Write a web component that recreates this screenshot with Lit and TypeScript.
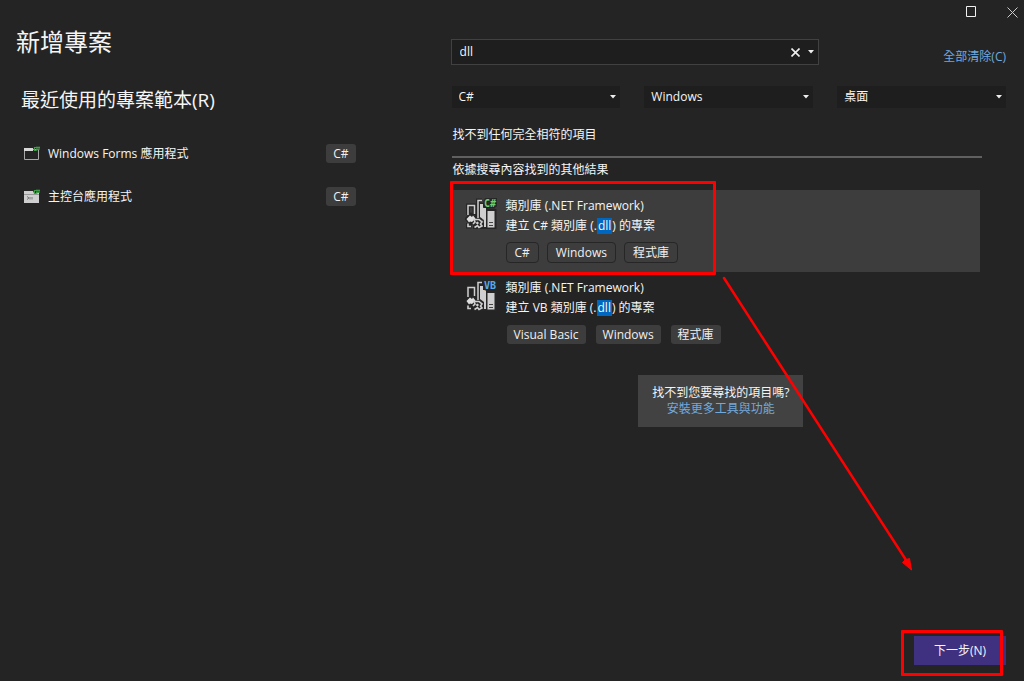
import { LitElement, html, css, svg } from "lit";
import { customElement, property } from "lit/decorators.js";

const FONT = css`"Open Sans", "Noto Sans CJK TC", sans-serif`;

@customElement("tag-chip")
class TagChip extends LitElement {
  @property({ type: Boolean, reflect: true }) outlined = false;

  static styles = css`
    :host {
      display: inline-block;
      box-sizing: border-box;
      padding: 0 7px;
      border: 1px solid transparent;
      border-radius: 4px;
      background: #3d3d3d;
      background-clip: padding-box;
      color: #f0f0f0;
      font: 12px/19px ${FONT};
      white-space: nowrap;
    }
    :host([outlined]) {
      padding: 0 8px;
      border-color: #262626;
    }
  `;

  render() {
    return html`<slot></slot>`;
  }
}

@customElement("library-icon")
class LibraryIcon extends LitElement {
  @property() label = "C#";
  @property() tint = "#6fcf73";

  static styles = css`
    :host {
      display: block;
      width: 32px;
      height: 34px;
    }
    svg {
      display: block;
    }
    .badge {
      font: bold 10px "DejaVu Sans Mono", monospace;
      paint-order: stroke;
      stroke: #262626;
      stroke-width: 3px;
    }
  `;

  render() {
    const shape = svg`
      <path d="M3 17V7.500H9.500V17M13 22V2.500H17M15 7H21V29H15ZM22.500 13H29.500V29H22.500Z
        M2 21L6 17L10 21L6 25ZM3 25V28.500H6.500M10 19H15V22M10 29H14L17 26L14 23L10 25Z"/>`;
    return html`
      <svg width="32" height="34" viewBox="0 0 32 34" aria-hidden="true">
        <g fill="none" stroke="#262626" stroke-width="4">${shape}</g>
        <path d="M3 17V7.500H9.500V16M13 20V2.500H17" fill="none" stroke="#cfcfcf" stroke-width="1.500" />
        <path d="M15 6H18V10H21V29H19V22L15 19Z" fill="#cfcfcf" />
        <path d="M22.500 13H29.500V29.500H22.500Z" fill="#cfcfcf" />
        <path d="M24 24.500H28M24 27.500H28" stroke="#444" stroke-width="1" />
        <path d="M1.500 21L5 17.500L7 19L8 17.500L10.500 20.500L7 24L5 23.500L4 24.500Z" fill="#dedede" />
        <path d="M3 25.500V28.500H6M8 26L10 24L9 21.500H14L17 24L15.500 26L17 28L14 29.500L12.500 27.500L9.500 29.500"
          fill="none" stroke="#cfcfcf" stroke-width="1.600" />
        <path d="M10.500 25L12.500 23.500L14 25L12.500 26.500Z" fill="#cfcfcf" />
        <text class="badge" x="19" y="9" fill=${this.tint}>${this.label}</text>
      </svg>
    `;
  }
}

@customElement("template-result")
class TemplateResult extends LitElement {
  @property() language = "";
  @property() tint = "";
  @property({ attribute: false }) tags: string[] = [];
  @property({ type: Boolean, reflect: true }) selected = false;

  static styles = css`
    :host {
      display: grid;
      grid-template-columns: 32px 1fr;
      column-gap: 9px;
      position: relative;
      padding: 6px 13px 9px;
      color: #f5f5f5;
      font: 12px/20px ${FONT};
    }
    :host([selected]) {
      background: #3d3d3d;
    }
    h3,
    p {
      margin: 0;
      font: inherit;
    }
    library-icon {
      margin-top: 2px;
    }
    mark {
      display: inline-block;
      padding: 0 1px;
      background: #0067c0;
      color: inherit;
      line-height: 16px;
    }
    .tags {
      display: flex;
      flex-wrap: wrap;
      gap: 8px;
      margin-top: 6px;
    }
    .frame {
      position: absolute;
      left: -2px;
      top: -9px;
      width: 260px;
      bottom: -3px;
      border: 3px solid #f00;
      border-radius: 1px;
      pointer-events: none;
    }
  `;

  render() {
    return html`
      <library-icon .label=${this.language} .tint=${this.tint}></library-icon>
      <div>
        <h3>類別庫 (.NET Framework)</h3>
        <p>建立 ${this.language} 類別庫 (.<mark>dll</mark>) 的專案</p>
        <div class="tags">
          ${this.tags.map((t) => html`<tag-chip ?outlined=${this.selected}>${t}</tag-chip>`)}
        </div>
      </div>
      ${this.selected ? html`<div class="frame"></div>` : null}
    `;
  }
}

@customElement("filter-select")
class FilterSelect extends LitElement {
  @property() label = "";
  @property() value = "";

  static styles = css`
    :host {
      display: grid;
      align-items: center;
      flex: 1;
      background: #1e1e1e;
    }
    select,
    svg {
      grid-area: 1 / 1;
    }
    select {
      appearance: none;
      width: 100%;
      height: 22px;
      padding: 0 20px 0 7px;
      border: 0;
      background: transparent;
      color: #f5f5f5;
      font: 12px/20px ${FONT};
    }
    svg {
      justify-self: end;
      margin-right: 4px;
      pointer-events: none;
    }
  `;

  render() {
    return html`
      <select aria-label=${this.label}>
        <option selected>${this.value}</option>
      </select>
      <svg width="6" height="4" viewBox="0 0 6 4" aria-hidden="true"><path d="M0 0H6L3 3.500Z" fill="#eee" /></svg>
    `;
  }
}

@customElement("app-root")
class AppRoot extends LitElement {
  static styles = css`
    :host {
      display: flex;
      flex-direction: column;
      box-sizing: border-box;
      position: relative;
      min-height: 100vh;
      overflow: hidden;
      background: #242424;
      color: #f5f5f5;
      font: 12px/16px ${FONT};
    }
    button {
      padding: 0;
      border: 0;
      background: none;
      color: inherit;
      font: inherit;
    }
    svg {
      display: block;
    }
    a {
      color: #71a9dc;
      text-decoration: none;
    }
    .titlebar {
      display: flex;
      justify-content: flex-end;
      align-items: center;
      gap: 30px;
      height: 24px;
      padding-right: 6px;
    }
    main {
      flex: 1;
      display: grid;
      grid-template-columns: 44fr 56fr;
    }
    .recent {
      padding: 0 94px 0 16px;
    }
    h1 {
      margin: 0;
      font-size: 24px;
      line-height: 36px;
      font-weight: 400;
    }
    h2 {
      margin: 26px 0 0 5px;
      font-size: 19px;
      line-height: 28px;
      font-weight: 400;
    }
    .recent ul {
      display: grid;
      gap: 22px;
      margin: 29px 0 0;
      padding: 0 0 0 8px;
      list-style: none;
    }
    .recent li {
      display: grid;
      grid-template-columns: 16px 1fr auto;
      align-items: center;
      column-gap: 8px;
    }
    .browse {
      display: flex;
      flex-direction: column;
      padding: 15px 18px 0 0;
    }
    .searchrow {
      display: flex;
      justify-content: space-between;
      align-items: flex-end;
    }
    .search {
      display: flex;
      align-items: center;
      gap: 8px;
      flex: 0 1 368px;
      box-sizing: border-box;
      height: 26px;
      padding: 0 4px 0 8px;
      border: 1px solid #414141;
      background: #1e1e1e;
    }
    .search input {
      flex: 1;
      min-width: 0;
      padding: 0;
      border: 0;
      outline: 0;
      background: transparent;
      color: inherit;
      font: inherit;
    }
    .filters {
      display: flex;
      gap: 24px;
      margin-top: 21px;
      padding-left: 1px;
    }
    .results {
      margin: 0 16px 0 1px;
    }
    .nomatch {
      margin: 19px 8px 0 0;
      padding: 0 0 13px 1px;
      border-bottom: 2px solid #606060;
    }
    .others {
      margin: 4px 0 12px;
      padding-left: 1px;
    }
    template-result {
      margin-right: 10px;
    }
    .missing {
      width: fit-content;
      box-sizing: border-box;
      margin: 21px auto 0;
      padding: 10px 14px;
      background: #424242;
      text-align: center;
    }
    .missing p {
      margin: 0;
    }
    footer {
      display: flex;
      justify-content: flex-end;
      padding: 0 18px 16px;
    }
    .nextwrap {
      position: relative;
    }
    .next {
      padding: 0 20px;
      background: #403080;
      line-height: 29px;
    }
    .nextframe {
      position: absolute;
      inset: -6px 3px -11px -13px;
      border: 3px solid #f00;
      border-radius: 1px;
      pointer-events: none;
    }
    .arrow {
      position: absolute;
      left: 720px;
      top: 274px;
      pointer-events: none;
    }
  `;

  private recentIcon(kind: string) {
    return html`
      <svg width="16" height="16" viewBox="0 0 16 16" aria-hidden="true">
        ${kind === "form"
          ? svg`<path d="M.500 3.500H14.500V13.500H.500Z" fill="#242424" stroke="#a8a8a8"/><path d="M0 2H9V5H0Z" fill="#d8d8d8"/>`
          : svg`<path d="M0 2H9L10 4H15V14H0Z" fill="#cfcfcf"/><path d="M0 5.500H15" stroke="#999"/><path d="M3 7.500L5 9L3 10.500M6 8V10.500M8 8V10.500" fill="none" stroke="#777"/>`}
        <path d="M13 1.500H10.500V4.500H12.500M13 .500V4.500M15 .500V4M12 1.500H16M12 3.500H15.500" fill="none" stroke="#3f9b45" stroke-width="1.200" />
      </svg>
    `;
  }

  render() {
    return html`
      <header class="titlebar">
        <button aria-label="最大化">
          <svg width="12" height="12" viewBox="0 0 12 12"><path d="M1.500 .500H10.500V10.500H1.500Z" fill="none" stroke="#f0f0f0" /></svg>
        </button>
        <button aria-label="關閉">
          <svg width="11" height="11" viewBox="0 0 11 11"><path d="M.500 .500L10.500 10.500M10.500 .500L.500 10.500" stroke="#ccc" /></svg>
        </button>
      </header>
      <main>
        <section class="recent">
          <h1>新增專案</h1>
          <h2>最近使用的專案範本(R)</h2>
          <ul>
            <li>${this.recentIcon("form")}<span>Windows Forms 應用程式</span><tag-chip>C#</tag-chip></li>
            <li>${this.recentIcon("console")}<span>主控台應用程式</span><tag-chip>C#</tag-chip></li>
          </ul>
        </section>
        <section class="browse">
          <div class="searchrow">
            <div class="search">
              <input type="text" aria-label="搜尋" value="dll" />
              <button aria-label="清除">
                <svg width="9" height="9" viewBox="0 0 9 9"><path d="M.500 .500L8.500 8.500M8.500 .500L.500 8.500" stroke="#eee" stroke-width="1.600" /></svg>
              </button>
              <button aria-label="搜尋記錄">
                <svg width="6" height="4" viewBox="0 0 6 4"><path d="M0 0H6L3 3.500Z" fill="#eee" /></svg>
              </button>
            </div>
            <a href="#">全部清除(C)</a>
          </div>
          <div class="filters">
            <filter-select label="語言" value="C#"></filter-select>
            <filter-select label="平台" value="Windows"></filter-select>
            <filter-select label="專案類型" value="桌面"></filter-select>
          </div>
          <div class="results">
            <p class="nomatch">找不到任何完全相符的項目</p>
            <p class="others">依據搜尋內容找到的其他結果</p>
            <template-result selected language="C#" tint="#6fcf73" .tags=${["C#", "Windows", "程式庫"]}></template-result>
            <template-result language="VB" tint="#55aaf0" .tags=${["Visual Basic", "Windows", "程式庫"]}></template-result>
            <div class="missing">
              <p>找不到您要尋找的項目嗎?</p>
              <a href="#">安裝更多工具與功能</a>
            </div>
          </div>
        </section>
      </main>
      <footer>
        <div class="nextwrap">
          <button class="next">下一步(N)</button>
          <div class="nextframe"></div>
        </div>
      </footer>
      <svg class="arrow" width="196" height="300" viewBox="0 0 196 300" aria-hidden="true">
        <path d="M4 4L186 286" stroke="#f00" stroke-width="2.500" stroke-linecap="round" />
        <path d="M191.500 296L182.500 288.500L185 286L189.500 284.500Z" fill="#f00" stroke="#f00" />
      </svg>
    `;
  }
}
